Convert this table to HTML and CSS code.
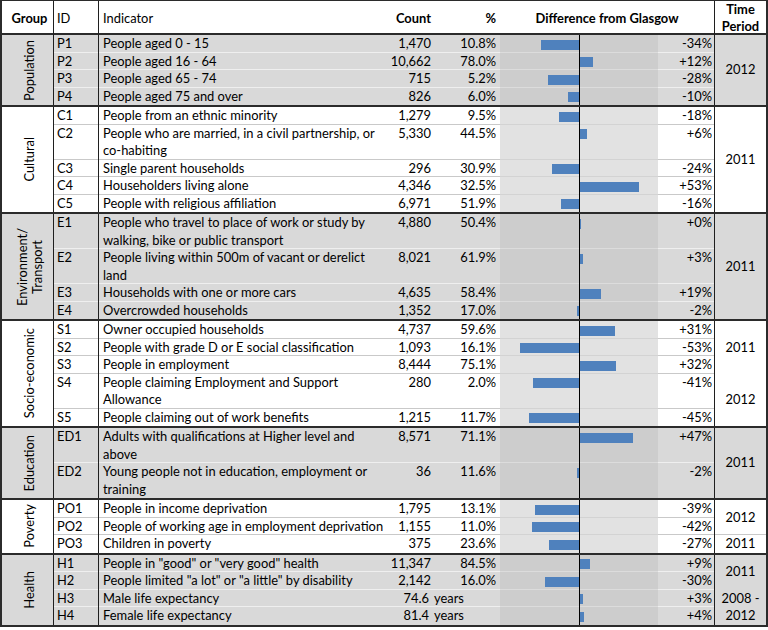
FILE: index.html
```html
<!DOCTYPE html>
<html lang="en">
<head>
<meta charset="utf-8">
<title>Indicators – Difference from Glasgow</title>
<link rel="stylesheet" href="styles.css">
</head>
<body>
<div class="sheet">
  <div class="cols head">
    <div class="h-group">Group</div>
    <div class="h-id">ID</div>
    <div class="h-ind">Indicator</div>
    <div class="h-count">Count</div>
    <div class="h-pct">%</div>
    <div class="h-diff">Difference from Glasgow</div>
    <div class="h-time">Time<br>Period</div>
  </div>

  <section class="cols grp shade rows4">
    <div class="gname"><span>Population</span></div>
    <div class="time r1 s4">2012</div>
    <div class="c id">P1</div><div class="c ind">People aged 0 - 15</div><div class="c num">1,470</div><div class="c pct">10.8%</div>
    <div class="c chart"><span class="neg"><i class="bar" style="--v:34"></i></span><span class="axis"></span><span class="pos"></span></div><div class="c val">-34%</div>
    <div class="c id">P2</div><div class="c ind">People aged 16 - 64</div><div class="c num">10,662</div><div class="c pct">78.0%</div>
    <div class="c chart"><span class="neg"></span><span class="axis"></span><span class="pos"><i class="bar" style="--v:12"></i></span></div><div class="c val">+12%</div>
    <div class="c id">P3</div><div class="c ind">People aged 65 - 74</div><div class="c num">715</div><div class="c pct">5.2%</div>
    <div class="c chart"><span class="neg"><i class="bar" style="--v:28"></i></span><span class="axis"></span><span class="pos"></span></div><div class="c val">-28%</div>
    <div class="c id">P4</div><div class="c ind">People aged 75 and over</div><div class="c num">826</div><div class="c pct">6.0%</div>
    <div class="c chart"><span class="neg"><i class="bar" style="--v:10"></i></span><span class="axis"></span><span class="pos"></span></div><div class="c val">-10%</div>
  </section>

  <section class="cols grp plain rows5">
    <div class="gname"><span>Cultural</span></div>
    <div class="time r1 s5">2011</div>
    <div class="c id">C1</div><div class="c ind">People from an ethnic minority</div><div class="c num">1,279</div><div class="c pct">9.5%</div>
    <div class="c chart"><span class="neg"><i class="bar" style="--v:18"></i></span><span class="axis"></span><span class="pos"></span></div><div class="c val">-18%</div>
    <div class="c id">C2</div><div class="c ind">People who are married, in a civil partnership, or<br>co-habiting</div><div class="c num">5,330</div><div class="c pct">44.5%</div>
    <div class="c chart"><span class="neg"></span><span class="axis"></span><span class="pos"><i class="bar" style="--v:6"></i></span></div><div class="c val">+6%</div>
    <div class="c id">C3</div><div class="c ind">Single parent households</div><div class="c num">296</div><div class="c pct">30.9%</div>
    <div class="c chart"><span class="neg"><i class="bar" style="--v:24"></i></span><span class="axis"></span><span class="pos"></span></div><div class="c val">-24%</div>
    <div class="c id">C4</div><div class="c ind">Householders living alone</div><div class="c num">4,346</div><div class="c pct">32.5%</div>
    <div class="c chart"><span class="neg"></span><span class="axis"></span><span class="pos"><i class="bar" style="--v:53"></i></span></div><div class="c val">+53%</div>
    <div class="c id">C5</div><div class="c ind">People with religious affiliation</div><div class="c num">6,971</div><div class="c pct">51.9%</div>
    <div class="c chart"><span class="neg"><i class="bar" style="--v:16"></i></span><span class="axis"></span><span class="pos"></span></div><div class="c val">-16%</div>
  </section>

  <section class="cols grp shade rows4">
    <div class="gname"><span>Environment/<br>Transport</span></div>
    <div class="time r1 s4">2011</div>
    <div class="c id">E1</div><div class="c ind">People who travel to place of work or study by<br>walking, bike or public transport</div><div class="c num">4,880</div><div class="c pct">50.4%</div>
    <div class="c chart"><span class="neg"></span><span class="axis"></span><span class="pos"><i class="bar" style="--v:0.4"></i></span></div><div class="c val">+0%</div>
    <div class="c id">E2</div><div class="c ind">People living within 500m of vacant or derelict<br>land</div><div class="c num">8,021</div><div class="c pct">61.9%</div>
    <div class="c chart"><span class="neg"></span><span class="axis"></span><span class="pos"><i class="bar" style="--v:3"></i></span></div><div class="c val">+3%</div>
    <div class="c id">E3</div><div class="c ind">Households with one or more cars</div><div class="c num">4,635</div><div class="c pct">58.4%</div>
    <div class="c chart"><span class="neg"></span><span class="axis"></span><span class="pos"><i class="bar" style="--v:19"></i></span></div><div class="c val">+19%</div>
    <div class="c id">E4</div><div class="c ind">Overcrowded households</div><div class="c num">1,352</div><div class="c pct">17.0%</div>
    <div class="c chart"><span class="neg"><i class="bar" style="--v:2"></i></span><span class="axis"></span><span class="pos"></span></div><div class="c val">-2%</div>
  </section>

  <section class="cols grp plain rows5">
    <div class="gname"><span>Socio-economic</span></div>
    <div class="time r1 s3">2011</div>
    <div class="time r4 s2">2012</div>
    <div class="c id">S1</div><div class="c ind">Owner occupied households</div><div class="c num">4,737</div><div class="c pct">59.6%</div>
    <div class="c chart"><span class="neg"></span><span class="axis"></span><span class="pos"><i class="bar" style="--v:31"></i></span></div><div class="c val">+31%</div>
    <div class="c id">S2</div><div class="c ind">People with grade D or E social classification</div><div class="c num">1,093</div><div class="c pct">16.1%</div>
    <div class="c chart"><span class="neg"><i class="bar" style="--v:53"></i></span><span class="axis"></span><span class="pos"></span></div><div class="c val">-53%</div>
    <div class="c id">S3</div><div class="c ind">People in employment</div><div class="c num">8,444</div><div class="c pct">75.1%</div>
    <div class="c chart"><span class="neg"></span><span class="axis"></span><span class="pos"><i class="bar" style="--v:32"></i></span></div><div class="c val">+32%</div>
    <div class="c id">S4</div><div class="c ind">People claiming Employment and Support<br>Allowance</div><div class="c num">280</div><div class="c pct">2.0%</div>
    <div class="c chart"><span class="neg"><i class="bar" style="--v:41"></i></span><span class="axis"></span><span class="pos"></span></div><div class="c val">-41%</div>
    <div class="c id">S5</div><div class="c ind">People claiming out of work benefits</div><div class="c num">1,215</div><div class="c pct">11.7%</div>
    <div class="c chart"><span class="neg"><i class="bar" style="--v:45"></i></span><span class="axis"></span><span class="pos"></span></div><div class="c val">-45%</div>
  </section>

  <section class="cols grp shade rows2">
    <div class="gname"><span>Education</span></div>
    <div class="time r1 s2">2011</div>
    <div class="c id">ED1</div><div class="c ind">Adults with qualifications at Higher level and<br>above</div><div class="c num">8,571</div><div class="c pct">71.1%</div>
    <div class="c chart"><span class="neg"></span><span class="axis"></span><span class="pos"><i class="bar" style="--v:47"></i></span></div><div class="c val">+47%</div>
    <div class="c id">ED2</div><div class="c ind">Young people not in education, employment or<br>training</div><div class="c num">36</div><div class="c pct">11.6%</div>
    <div class="c chart"><span class="neg"><i class="bar" style="--v:2"></i></span><span class="axis"></span><span class="pos"></span></div><div class="c val">-2%</div>
  </section>

  <section class="cols grp plain rows3">
    <div class="gname"><span>Poverty</span></div>
    <div class="time r1 s2 tsep">2012</div>
    <div class="time r3 s1">2011</div>
    <div class="c id">PO1</div><div class="c ind">People in income deprivation</div><div class="c num">1,795</div><div class="c pct">13.1%</div>
    <div class="c chart"><span class="neg"><i class="bar" style="--v:39"></i></span><span class="axis"></span><span class="pos"></span></div><div class="c val">-39%</div>
    <div class="c id">PO2</div><div class="c ind">People of working age in employment deprivation</div><div class="c num">1,155</div><div class="c pct">11.0%</div>
    <div class="c chart"><span class="neg"><i class="bar" style="--v:42"></i></span><span class="axis"></span><span class="pos"></span></div><div class="c val">-42%</div>
    <div class="c id">PO3</div><div class="c ind">Children in poverty</div><div class="c num">375</div><div class="c pct">23.6%</div>
    <div class="c chart"><span class="neg"><i class="bar" style="--v:27"></i></span><span class="axis"></span><span class="pos"></span></div><div class="c val">-27%</div>
  </section>

  <section class="cols grp shade rows4">
    <div class="gname"><span>Health</span></div>
    <div class="time r1 s2">2011</div>
    <div class="time r3 s2">2008 -<br>2012</div>
    <div class="c id">H1</div><div class="c ind">People in "good" or "very good" health</div><div class="c num">11,347</div><div class="c pct">84.5%</div>
    <div class="c chart"><span class="neg"></span><span class="axis"></span><span class="pos"><i class="bar" style="--v:9"></i></span></div><div class="c val">+9%</div>
    <div class="c id">H2</div><div class="c ind">People limited "a lot" or "a little" by disability</div><div class="c num">2,142</div><div class="c pct">16.0%</div>
    <div class="c chart"><span class="neg"><i class="bar" style="--v:30"></i></span><span class="axis"></span><span class="pos"></span></div><div class="c val">-30%</div>
    <div class="c id">H3</div><div class="c ind">Male life expectancy</div><div class="c num life">74.6</div><div class="c pct unit">years</div>
    <div class="c chart"><span class="neg"></span><span class="axis"></span><span class="pos"><i class="bar" style="--v:3"></i></span></div><div class="c val">+3%</div>
    <div class="c id">H4</div><div class="c ind">Female life expectancy</div><div class="c num life">81.4</div><div class="c pct unit">years</div>
    <div class="c chart"><span class="neg"></span><span class="axis"></span><span class="pos"><i class="bar" style="--v:4"></i></span></div><div class="c val">+4%</div>
  </section>
</div>
</body>
</html>
```

FILE: styles.css
```css
* {
  box-sizing: border-box;
  margin: 0;
  padding: 0;
}

body {
  margin: 0;
  background: #ffffff;
  font-family: Lato, "Open Sans", "Noto Sans", sans-serif;
  font-size: 12.9px;
  color: #000000;
}

.sheet {
  width: 768px;
  border: 2px solid #2b2b2b;
  border-top-width: 1px;
}

.cols {
  display: grid;
  grid-template-columns: 52px 45px 281px 56px 64px 158px 56px 52px;
}

/* header */
.head {
  height: 34px;
  border-bottom: 2px solid #2b2b2b;
  font-weight: 700;
}

.head > div {
  display: flex;
  align-items: center;
  line-height: 17px;
}

.h-group {
  justify-content: center;
  padding-left: 4px;
  border-right: 1px solid #1f1f1f;
}

.h-id {
  padding-left: 3px;
  border-right: 1px solid #1f1f1f;
  font-weight: 400;
}

.h-ind {
  padding-left: 4px;
  font-weight: 400;
}

.h-count {
  justify-content: flex-end;
  padding-right: 5px;
}

.h-pct {
  justify-content: flex-end;
  padding-right: 4px;
}

.h-diff {
  grid-column: span 2;
  justify-content: center;
}

.h-time {
  justify-content: center;
  text-align: center;
  border-left: 1px solid #1f1f1f;
}

/* groups */
.grp + .grp {
  border-top: 2px solid #2b2b2b;
}

.shade {
  background: #d9d9d9;
  --sep: #efefef;
  --chart: #cdcdcd;
  --csep: #dcdcdc;
}

.plain {
  background: #ffffff;
  --sep: #c9c9c9;
  --chart: #e2e2e2;
  --csep: #d3d3d3;
}

.rows2 { grid-template-rows: repeat(2, auto); }
.rows3 { grid-template-rows: repeat(3, auto); }
.rows4 { grid-template-rows: repeat(4, auto); }
.rows5 { grid-template-rows: repeat(5, auto); }

.gname {
  grid-column: 1;
  grid-row: 1 / -1;
  display: flex;
  align-items: center;
  justify-content: center;
  padding-left: 4px;
  border-right: 1px solid #1f1f1f;
}

.gname span {
  writing-mode: vertical-rl;
  transform: rotate(180deg);
  text-align: center;
  line-height: 15px;
}

.time {
  grid-column: 8;
  display: flex;
  align-items: center;
  justify-content: center;
  text-align: center;
  line-height: 17.5px;
  border-left: 1px solid #1f1f1f;
}

.r1 { grid-row-start: 1; }
.r3 { grid-row-start: 3; }
.r4 { grid-row-start: 4; }
.s1 { grid-row-end: span 1; }
.s2 { grid-row-end: span 2; }
.s3 { grid-row-end: span 3; }
.s4 { grid-row-end: span 4; }
.s5 { grid-row-end: span 5; }

.tsep {
  background-image: linear-gradient(to top, var(--sep) 1px, transparent 1px);
}

/* data cells */
.c {
  line-height: 17.5px;
  white-space: nowrap;
  background-image: linear-gradient(to top, var(--sep) 1px, transparent 1px);
}

.c:nth-last-child(-n+6) {
  background-image: none;
}

.id {
  padding-left: 3px;
  border-right: 1px solid #1f1f1f;
}

.ind {
  padding-left: 4px;
}

.num {
  text-align: right;
  padding-right: 5px;
}

.num.life {
  padding-right: 7px;
}

.pct {
  text-align: right;
  padding-right: 4px;
}

.pct.unit {
  text-align: left;
  padding-right: 0;
  text-indent: -2px;
}

.val {
  text-align: right;
  padding-right: 2px;
}

.chart {
  display: grid;
  grid-template-columns: 79px 1px 78px;
  background-color: var(--chart);
  background-image: linear-gradient(to top, var(--csep) 1px, transparent 1px);
}

.chart:nth-last-child(-n+6) {
  background-image: none;
}

.neg {
  display: flex;
  justify-content: flex-end;
  align-items: flex-start;
}

.pos {
  display: flex;
  justify-content: flex-start;
  align-items: flex-start;
}

.axis {
  background: #000000;
}

.bar {
  display: block;
  height: 10px;
  margin-top: 4.5px;
  width: calc(var(--v) * 1.12px);
  background: #4f81bd;
}
```
